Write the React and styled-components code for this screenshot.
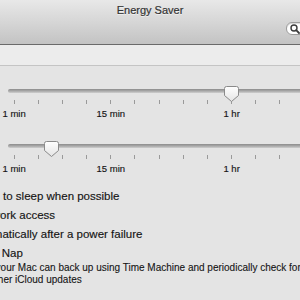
import React from 'react'
import styled, { createGlobalStyle } from 'styled-components'

const Global = createGlobalStyle`
  html, body {
    margin: 0;
    padding: 0;
    background: #e4e4e4;
    overflow: hidden;
  }
  * { box-sizing: border-box; }
`

const TICKS = 12
const LABELS = { 0: '1 min', 4: '15 min', 9: '1 hr' }

const Search = () => (
  <SearchField>
    <svg width="10" height="10" viewBox="0 0 10 10">
      <circle cx="4" cy="4" r="3" fill="none" stroke="#3c3c3c" strokeWidth="1.4" />
      <line x1="6.2" y1="6.2" x2="9" y2="9" stroke="#3c3c3c" strokeWidth="1.8" strokeLinecap="round" />
    </svg>
  </SearchField>
)

const Thumb = ({ at }) => (
  <ThumbShape style={{ left: at - 7.5 }} width="15" height="16" viewBox="0 0 15 16">
    <defs>
      <linearGradient id="tg" x1="0" y1="0" x2="0" y2="1">
        <stop offset="0" stopColor="#ffffff" />
        <stop offset="1" stopColor="#e4e4e4" />
      </linearGradient>
    </defs>
    <path d="M2.5 0.5 H12.5 Q14.5 0.5 14.5 2.5 V9.5 L7.5 15.5 L0.5 9.5 V2.5 Q0.5 0.5 2.5 0.5 Z"
      fill="url(#tg)" stroke="#8a8a8a" strokeWidth="1" />
  </ThumbShape>
)

const Slider = ({ value }) => (
  <SliderBlock>
    <TrackArea>
      <Track />
      <Thumb at={value} />
    </TrackArea>
    <TickGrid>
      {Array.from({ length: TICKS }).map((_, i) => (
        <TickCell key={i}>
          <Tick />
          {LABELS[i] && <TickLabel>{LABELS[i]}</TickLabel>}
        </TickCell>
      ))}
    </TickGrid>
  </SliderBlock>
)

const options = [
  'Put hard disks to sleep when possible',
  'Wake for network access',
  'Start up automatically after a power failure',
  'Enable Power Nap',
]

export default function App() {
  return (
    <Frame>
      <Global />
      <Header>
        <Title>Energy Saver</Title>
        <Toolbar>
          <Search />
        </Toolbar>
      </Header>
      <TabBand />
      <Pane>
        <Slider value={231} />
        <Slider value={51} />
        <Options>
          {options.map((o) => (
            <Row key={o}>
              <Check />
              <Label>{o}</Label>
            </Row>
          ))}
          <Description>
            <span>While sleeping, your Mac can back up using Time Machine and periodically check for</span>
            <span>new mail, and other iCloud updates</span>
          </Description>
        </Options>
      </Pane>
    </Frame>
  )
}

const Frame = styled.div`
  width: 300px;
  height: 300px;
  overflow: hidden;
  background: #e4e4e4;
  font-family: "Liberation Sans", Arial, sans-serif;
  color: #151515;
`

const Header = styled.header`
  height: 45px;
  background: linear-gradient(#e8e8e8, #d6d6d6 50%, #c3c3c3);
  border-bottom: 1px solid #6a6a6a;
  display: flex;
  flex-direction: column;
`

const Title = styled.div`
  height: 21px;
  line-height: 21px;
  text-align: center;
  font-size: 11px;
  color: #333;
  -webkit-text-stroke: 0.2px #333;
  text-shadow: 0 1px 0 rgba(255, 255, 255, 0.6);
`

const Toolbar = styled.div`
  display: flex;
  justify-content: flex-end;
  padding-top: 1px;
`

const SearchField = styled.div`
  width: 60px;
  height: 13px;
  margin-right: -46px;
  border: 1px solid #9c9c9c;
  border-radius: 6px;
  background: #fff;
  display: flex;
  align-items: center;
  padding-left: 3px;
  box-shadow: inset 0 1px 1px rgba(0, 0, 0, 0.15);
`

const TabBand = styled.div`
  height: 21px;
  background: #ececec;
  border-bottom: 1px solid #c4c4c4;
  box-shadow: 0 1px 0 #f2f2f2;
`

const Pane = styled.main`
  padding-top: 20px;
  background: #e4e4e4;
`

const SliderBlock = styled.section`
  & + & {
    margin-top: 22px;
  }
`

const TrackArea = styled.div`
  position: relative;
  height: 16px;
  padding-top: 3px;
`

const Track = styled.div`
  margin-left: 8px;
  height: 4px;
  border-radius: 2px 0 0 2px;
  background: linear-gradient(#8c8c8c, #a8a8a8 50%, #cfcfcf);
`

const ThumbShape = styled.svg`
  position: absolute;
  top: 0;
  display: block;
`

const TickGrid = styled.div`
  display: grid;
  grid-template-columns: repeat(${TICKS}, 24.18px);
  margin-left: 2px;
  margin-top: -2px;
`

const TickCell = styled.div`
  display: flex;
  flex-direction: column;
  align-items: center;
`

const Tick = styled.div`
  width: 1px;
  height: 4px;
  background: #9a9a9a;
`

const TickLabel = styled.div`
  margin-top: 4px;
  font-size: 9.5px;
  line-height: 11px;
  white-space: nowrap;
  -webkit-text-stroke: 0.15px #151515;
`

const Options = styled.div`
  margin-top: 12px;
  margin-left: -92px;
  white-space: nowrap;
`

const Row = styled.div`
  display: flex;
  align-items: center;
  gap: 5px;
  height: 19px;
`

const Check = styled.span`
  width: 14px;
  height: 14px;
  border: 1px solid #888;
  border-radius: 3px;
  background: #fff;
`

const Label = styled.span`
  font-size: 11.5px;
  -webkit-text-stroke: 0.15px #151515;
`

const Description = styled.p`
  margin: 0;
  padding-left: 17px;
  font-size: 10px;
  line-height: 12px;
  display: flex;
  flex-direction: column;
  -webkit-text-stroke: 0.1px #151515;
`
